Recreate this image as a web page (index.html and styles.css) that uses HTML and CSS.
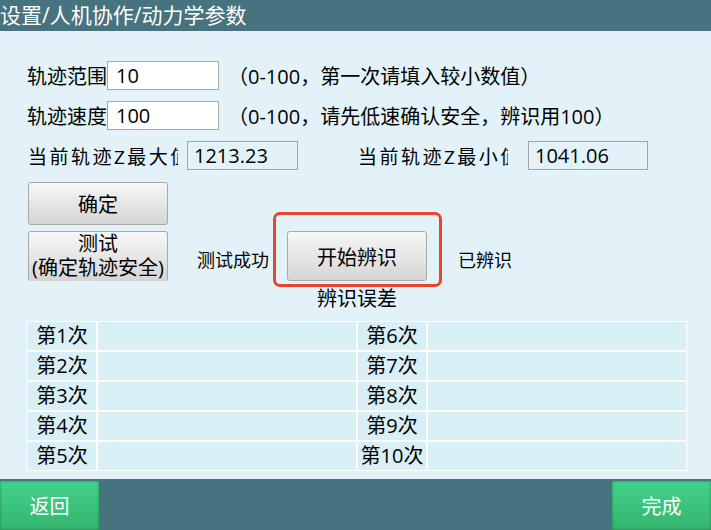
FILE: index.html
```html
<!DOCTYPE html>
<html lang="zh-CN">
<head>
<meta charset="UTF-8" />
<meta name="viewport" content="width=device-width, initial-scale=1" />
<title>动力学参数</title>
<link rel="stylesheet" href="styles.css">
</head>
<body>

<div class="screen">

  <div class="topbar">设置/人机协作/动力学参数</div>

  <div class="content">

    <!-- 轨迹参数 -->
    <div class="field-row">
      <span class="field-label">轨迹范围</span>
      <input class="num-input" type="text" value="10">
      <span class="hint">（0-100，第一次请填入较小数值）</span>
    </div>
    <div class="field-row">
      <span class="field-label">轨迹速度</span>
      <input class="num-input" type="text" value="100">
      <span class="hint">（0-100，请先低速确认安全，辨识用100）</span>
    </div>

    <!-- Z 范围 -->
    <div class="z-row">
      <span class="z-label">当前轨迹Z最大值</span>
      <span class="z-box">1213.23</span>
      <span class="z-label z-label-right">当前轨迹Z最小值</span>
      <span class="z-box z-box-wide">1041.06</span>
    </div>

    <button class="btn btn-ok">确定</button>

    <div class="action-row">
      <button class="btn btn-test"><span class="line">测试</span><span class="line">(确定轨迹安全)</span></button>
      <span class="status">测试成功</span>
      <div class="highlight">
        <button class="btn btn-ident">开始辨识</button>
      </div>
      <span class="status status-done">已辨识</span>
    </div>

    <div class="error-title">辨识误差</div>

    <div class="error-grid">
      <div class="cell cell-label">第1次</div><div class="cell"></div>
      <div class="cell cell-label">第6次</div><div class="cell"></div>
      <div class="cell cell-label">第2次</div><div class="cell"></div>
      <div class="cell cell-label">第7次</div><div class="cell"></div>
      <div class="cell cell-label">第3次</div><div class="cell"></div>
      <div class="cell cell-label">第8次</div><div class="cell"></div>
      <div class="cell cell-label">第4次</div><div class="cell"></div>
      <div class="cell cell-label">第9次</div><div class="cell"></div>
      <div class="cell cell-label">第5次</div><div class="cell"></div>
      <div class="cell cell-label">第10次</div><div class="cell"></div>
    </div>

  </div>

  <div class="bottombar">
    <button class="nav-btn">返回</button>
    <button class="nav-btn">完成</button>
  </div>

</div>

</body>
</html>
```

FILE: styles.css
```css
body {
  margin: 0;
  font-family: "Open Sans", "Noto Sans CJK SC", sans-serif;
  color: #000;
  background: #e3f2f8;
}
.screen {
  display: flex;
  flex-direction: column;
  height: 530px;
  width: 711px;
  overflow: hidden;
}
.topbar {
  height: 31px;
  line-height: 31px;
  background: #47737f;
  color: #fff;
  font-size: 21px;
  white-space: nowrap;
}
.content {
  flex: 1;
  padding: 30px 0 0 27px;
}

/* 参数行 */
.field-row {
  display: flex;
  align-items: center;
  height: 29px;
  margin-bottom: 11px;
  font-size: 20px;
}
.field-label {
  width: 80px;
  white-space: nowrap;
  overflow: hidden;
}
.num-input {
  box-sizing: border-box;
  width: 112px;
  height: 29px;
  border: 1px solid #a9a9a9;
  background: #fff;
  padding: 0 8px;
  font: inherit;
  font-size: 20px;
  color: #000;
  outline: none;
}
.hint {
  margin-left: 9px;
  white-space: nowrap;
}

.z-row {
  display: flex;
  align-items: center;
  height: 29px;
  margin-bottom: 12px;
}
.z-label {
  width: 150px;
  margin-left: 1px;
  font-size: 19px;
  letter-spacing: 2.5px;
  white-space: nowrap;
  overflow: hidden;
}
.z-label-right {
  margin-left: 60px;
  margin-right: 11px;
}
.z-box {
  box-sizing: border-box;
  width: 111px;
  height: 29px;
  line-height: 27px;
  margin-left: 9px;
  padding-left: 6px;
  border: 1px solid #a4a4a4;
  font-size: 20px;
}
.z-box-wide {
  width: 120px;
}

/* 按钮 */
.btn {
  box-sizing: border-box;
  width: 140px;
  border: 1px solid #a8a8a8;
  border-radius: 3px;
  background: linear-gradient(#f7f7f7, #d5d5d5);
  font-family: inherit;
  font-size: 20px;
  color: #000;
  padding: 0;
  cursor: pointer;
}
.btn-ok {
  display: block;
  height: 43px;
  margin-left: 1px;
}
.action-row {
  display: flex;
  align-items: center;
  margin-top: 6px;
}
.btn-test {
  display: flex;
  flex-direction: column;
  align-items: center;
  height: 50px;
  margin-left: 1px;
  overflow: hidden;
  white-space: nowrap;
  border-bottom: none;
}
.btn-test .line {
  display: block;
  height: 24px;
  line-height: 24px;
}
.btn-ident {
  display: block;
  height: 50px;
}
.status {
  width: 90px;
  margin-left: 29px;
  margin-top: 6px;
  font-size: 18px;
  white-space: nowrap;
}
.status-done {
  width: auto;
  margin-left: 31px;
}
.highlight {
  position: relative;
}
.highlight::before {
  content: "";
  position: absolute;
  left: -14px;
  right: -15px;
  top: -19px;
  bottom: -6px;
  border: 3px solid #e8432b;
  border-radius: 7px;
}

.error-title {
  width: 660px;
  margin-top: 5px;
  text-align: center;
  font-size: 20px;
  line-height: 26px;
}

/* 误差表 */
.error-grid {
  display: grid;
  grid-template-columns: 68px 258px 68px 258px;
  grid-auto-rows: 28px;
  gap: 2px;
  width: 660px;
  box-sizing: border-box;
  padding: 1px;
  margin-top: 9px;
  background: #fff;
}
.cell {
  background: #d8eff6;
}
.cell-label {
  text-align: center;
  font-size: 20px;
  line-height: 28px;
  white-space: nowrap;
}

.bottombar {
  display: flex;
  justify-content: space-between;
  align-items: flex-end;
  height: 51px;
  background: #47737f;
}
.nav-btn {
  width: 99px;
  height: 49px;
  border: none;
  background: linear-gradient(#42d38a, #34b46f);
  box-shadow: inset 0 0 3px rgba(20, 110, 60, 0.7);
  color: #fff;
  font-family: inherit;
  font-size: 20px;
  padding: 0;
}
```
